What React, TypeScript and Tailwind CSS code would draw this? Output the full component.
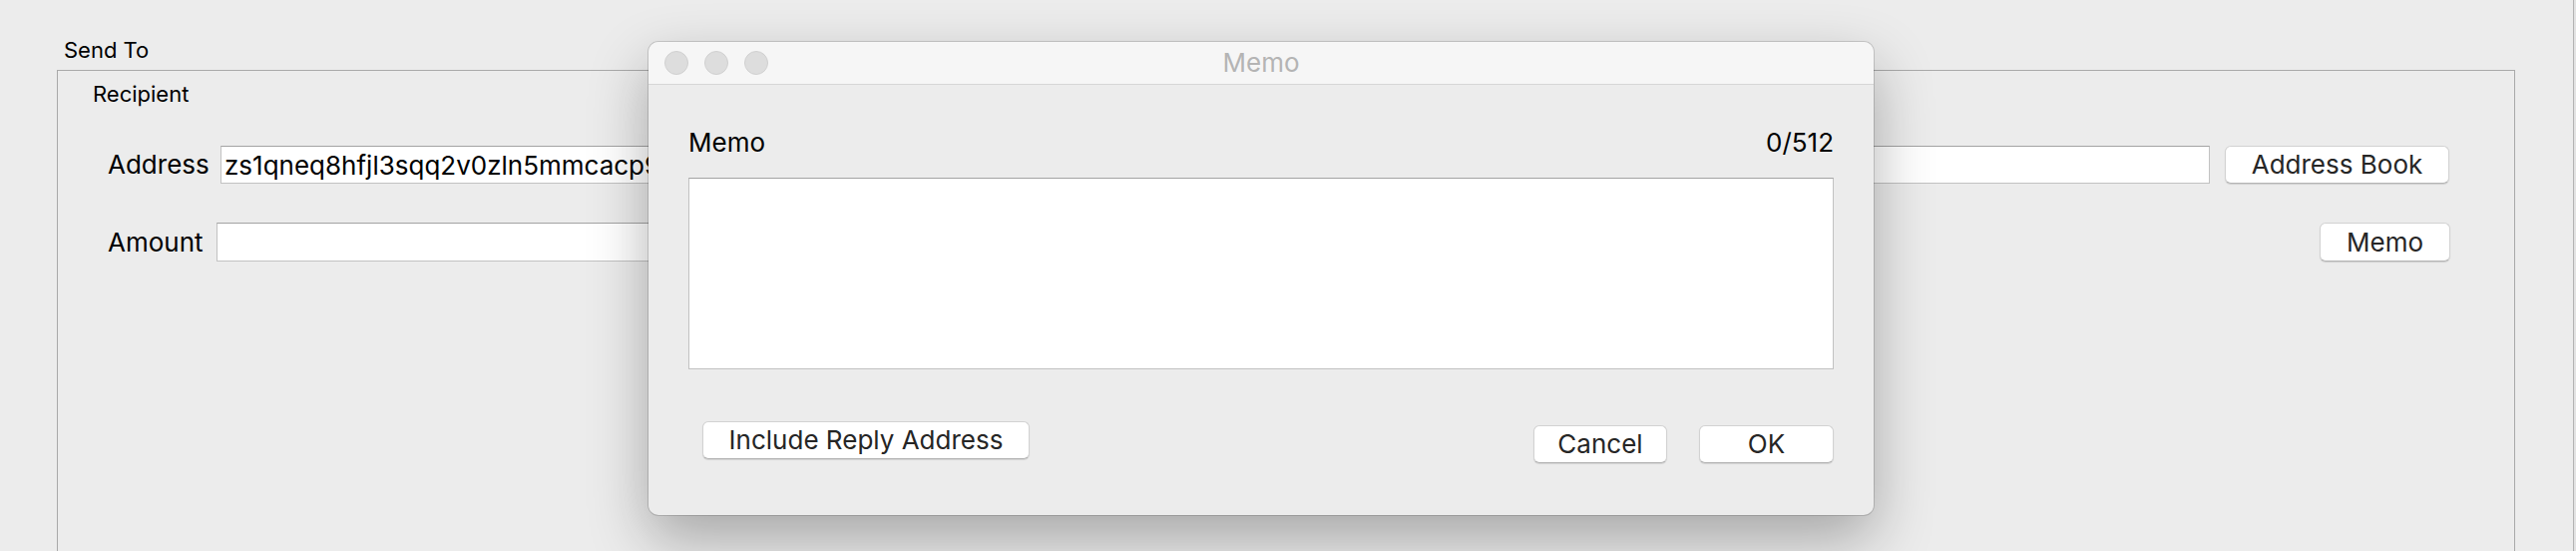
import type { ReactNode } from "react";

const ADDRESS =
  "zs1qneq8hfjl3sqq2v0zln5mmcacp9x7kdf3w6zj4ys8tnhl2vqpa0m9e5cxdrwk7ugq3hfz8ltn6ys0e";

function MacButton({ children, className }: { children: ReactNode; className: string }) {
  return (
    <button
      type="button"
      className={`flex items-center justify-center rounded-[6px] border border-[#d2d2d2] border-b-[#b4b4b4] bg-white text-[26px] leading-none text-[#262626] shadow-[0_1px_1px_rgba(0,0,0,0.12)] ${className}`}
    >
      {children}
    </button>
  );
}

function TrafficLight() {
  return <span className="h-[24px] w-[24px] rounded-full border border-[#d0d0d0] bg-[#dddddd]" />;
}

function MemoDialog() {
  return (
    <div className="absolute left-[650px] top-[42px] flex h-[474px] w-[1228px] flex-col overflow-hidden rounded-[10px] bg-[#ececec] shadow-[0_24px_60px_rgba(0,0,0,0.3),0_0_0_1px_rgba(0,0,0,0.14)]">
      {/* Title bar */}
      <div className="grid h-[43px] shrink-0 grid-cols-[1fr_auto_1fr] items-center border-b border-[#d6d6d6] bg-[#f6f6f6] px-[16px]">
        <div className="flex gap-[16px]">
          <TrafficLight />
          <TrafficLight />
          <TrafficLight />
        </div>
        <div className="text-[26px] leading-[42px] text-[#b4b4b4]">Memo</div>
        <div />
      </div>

      {/* Body */}
      <div className="flex flex-1 flex-col px-[40px] pt-[42px]">
        <div className="flex h-[32px] items-center justify-between text-[26px] leading-[32px] text-black">
          <span>Memo</span>
          <span>0/512</span>
        </div>
        <textarea
          className="mt-[19px] h-[192px] w-full resize-none border border-[#c2c2c2] border-t-[#a3a3a3] bg-white p-[4px] text-[26px] outline-none"
          defaultValue=""
        />
        <div className="mt-[52px] flex items-start">
          <MacButton className="ml-[14px] h-[38px] w-[328px]">Include Reply Address</MacButton>
          <div className="flex-1" />
          <MacButton className="mt-[4px] h-[38px] w-[134px]">Cancel</MacButton>
          <MacButton className="ml-[32px] mt-[4px] h-[38px] w-[135px]">OK</MacButton>
        </div>
      </div>
    </div>
  );
}

export default function App() {
  return (
    <div className="relative flex h-[552px] w-[2582px] overflow-hidden bg-[#ececec] font-['Inter','Liberation_Sans',sans-serif] text-black">
      <div className="flex-1 pl-[57px] pt-[37px]">
        <div className="pl-[7px] text-[22px] leading-[26px]">Send To</div>

        {/* Send To group box */}
        <div className="mt-[7px] h-[600px] w-[2464px] border border-[#a9a9a9] pl-[50px] pt-[10px]">
          <div className="-ml-[15px] text-[22px] leading-[26px]">Recipient</div>

          {/* Address row */}
          <div className="mt-[39px] flex h-[38px] items-center">
            <span className="w-[98px] text-[26px] leading-[38px]">Address</span>
            <div className="ml-[15px] flex h-[38px] w-[1994px] items-center border border-[#c2c2c2] border-t-[#a3a3a3] bg-white pl-[3px] text-[26px]">
              {/* the rest of the address sits under the memo sheet */}
              <span className="w-[426px] overflow-hidden whitespace-nowrap">{ADDRESS}</span>
            </div>
            <MacButton className="ml-[15px] h-[38px] w-[225px]">Address Book</MacButton>
          </div>

          {/* Amount row */}
          <div className="mt-[39px] flex h-[39px] items-center">
            <span className="w-[94px] text-[26px] leading-[39px]">Amount</span>
            <div className="ml-[15px] h-[39px] w-[1300px] border border-[#c2c2c2] border-t-[#a3a3a3] bg-white" />
            <div className="flex-1" />
            <MacButton className="mr-[64px] h-[39px] w-[131px]">Memo</MacButton>
          </div>
        </div>
      </div>

      <div className="w-[3px] shrink-0 border-l border-[#b3b3b3] bg-[#e3e3e3]" />

      <MemoDialog />
    </div>
  );
}
